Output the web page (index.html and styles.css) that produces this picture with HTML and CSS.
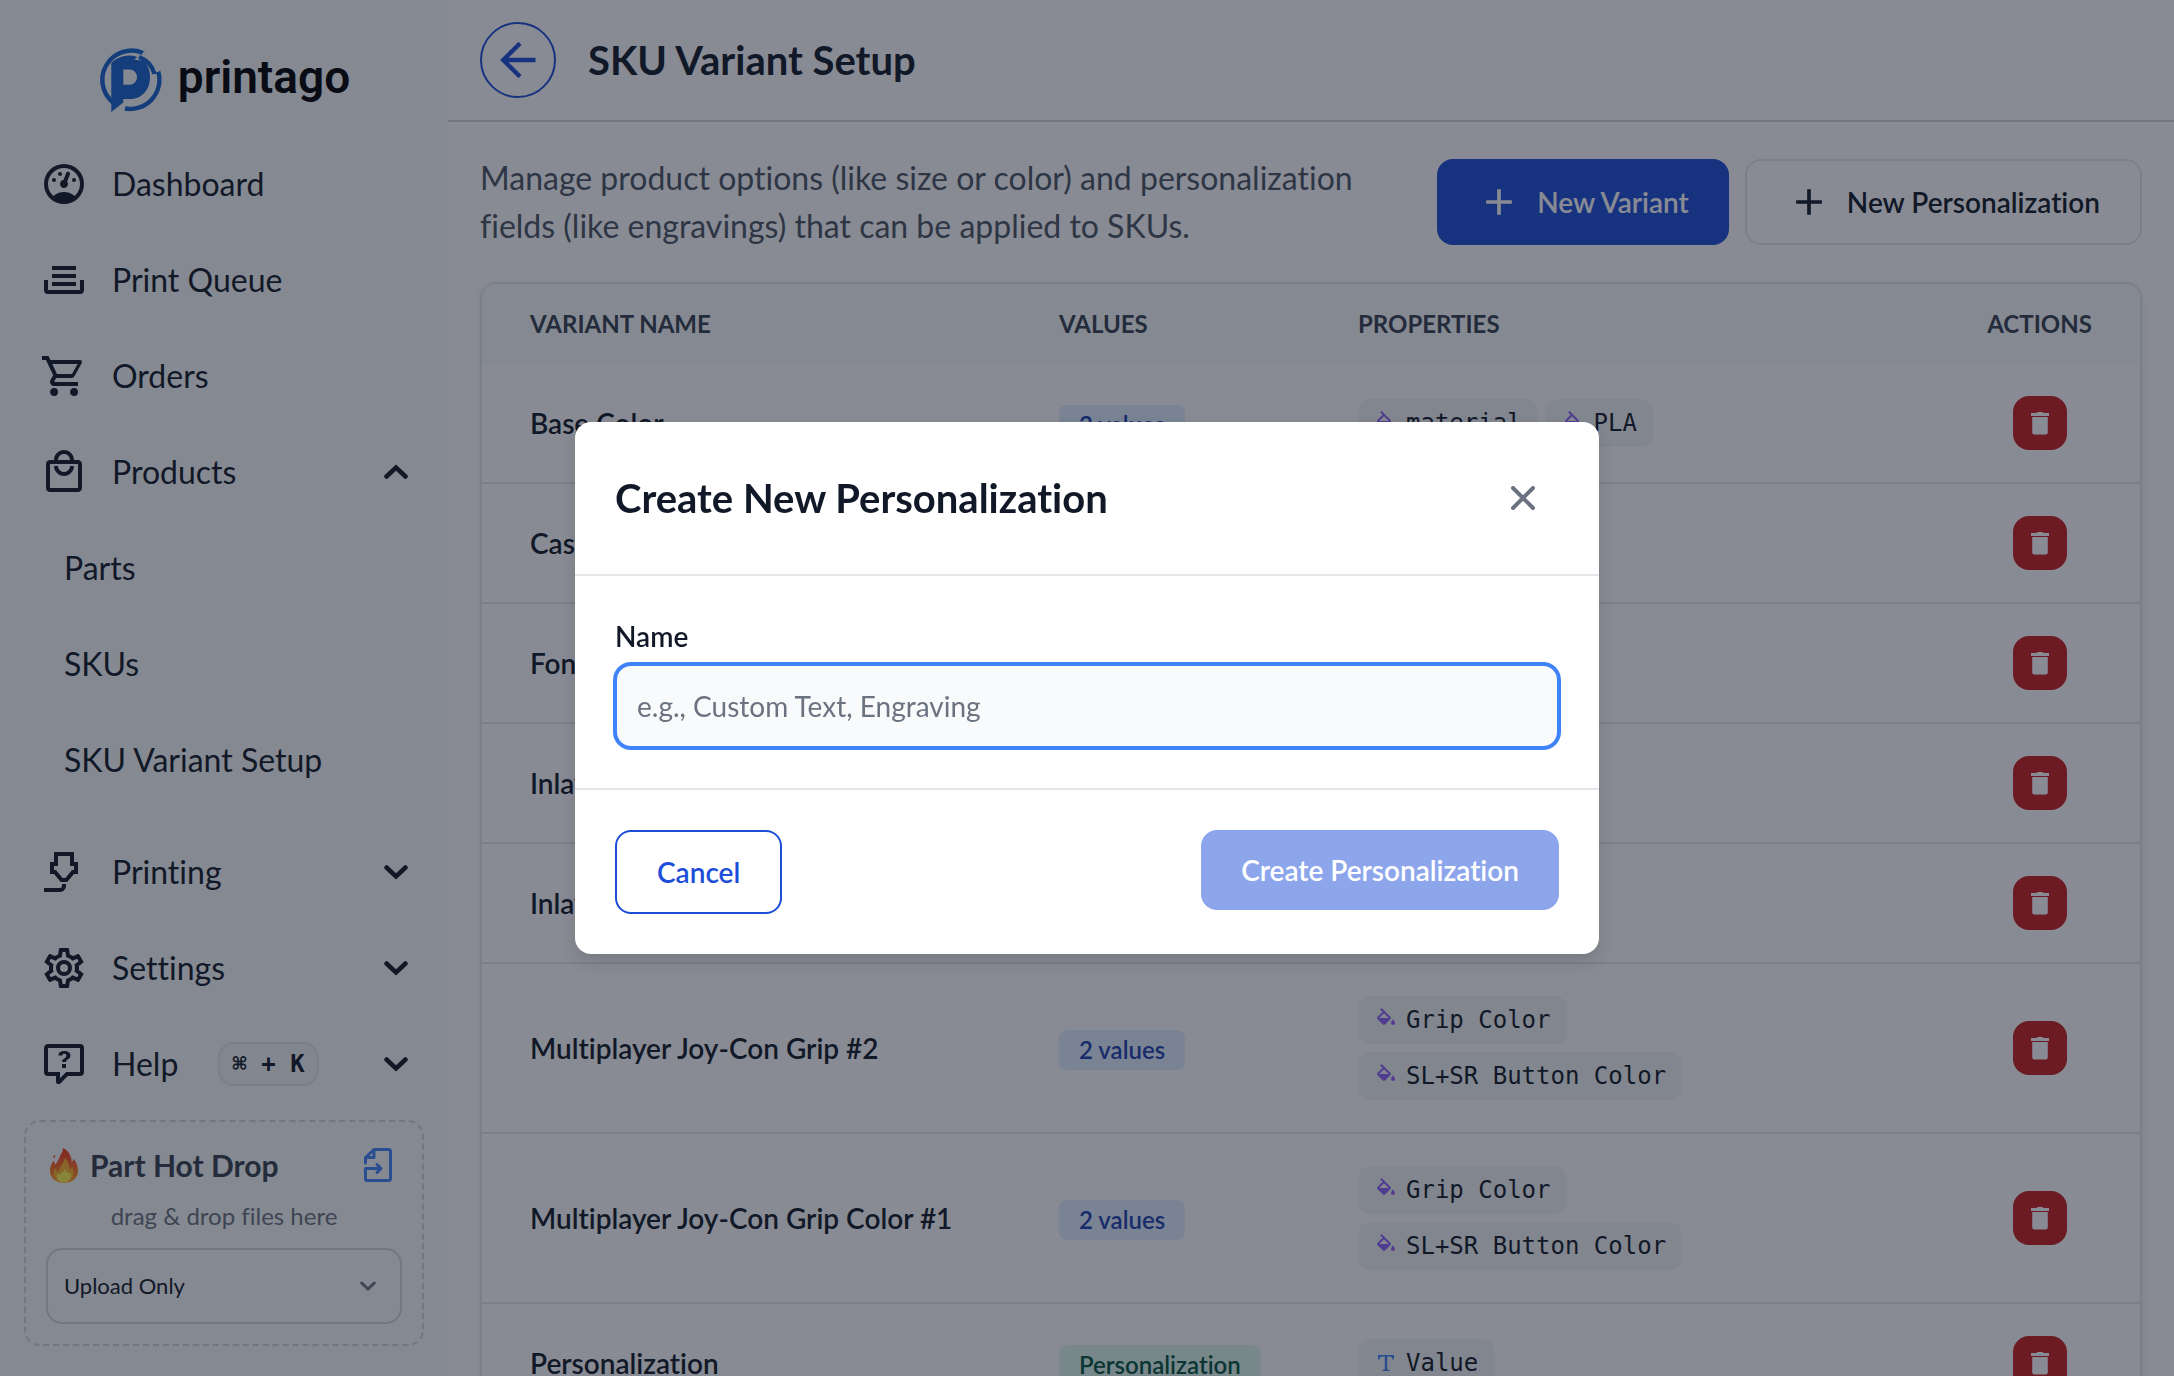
FILE: index.html
```html
<!DOCTYPE html>
<html lang="en">
<head>
<meta charset="utf-8">
<meta name="viewport" content="width=device-width, initial-scale=1">
<title>SKU Variant Setup - printago</title>
<link rel="stylesheet" href="styles.css">
</head>
<body>
<svg class="sprite" aria-hidden="true">
  <symbol id="i-gauge" viewBox="0 0 24 24"><path d="M12,2A10,10 0 0,0 2,12A10,10 0 0,0 12,22A10,10 0 0,0 22,12A10,10 0 0,0 12,2M12,4A8,8 0 0,1 20,12C20,14.4 19,16.5 17.3,18C15.9,16.7 14,16 12,16C10,16 8.2,16.7 6.7,18C5,16.5 4,14.4 4,12A8,8 0 0,1 12,4M14,5.89C13.62,5.9 13.26,6.15 13.1,6.54L11.81,9.77L11.71,10C11,10.13 10.41,10.6 10.14,11.26C9.73,12.29 10.23,13.45 11.26,13.86C12.29,14.27 13.45,13.77 13.86,12.74C14.12,12.08 14,11.32 13.57,10.76L13.67,10.5L14.96,7.29L14.97,7.26C15.17,6.75 14.92,6.17 14.41,5.96C14.28,5.91 14.15,5.89 14,5.89M10,6A1,1 0 0,0 9,7A1,1 0 0,0 10,8A1,1 0 0,0 11,7A1,1 0 0,0 10,6M7,9A1,1 0 0,0 6,10A1,1 0 0,0 7,11A1,1 0 0,0 8,10A1,1 0 0,0 7,9M17,9A1,1 0 0,0 16,10A1,1 0 0,0 17,11A1,1 0 0,0 18,10A1,1 0 0,0 17,9Z"/></symbol>
  <symbol id="i-tray" viewBox="0 0 24 24"><path d="M18 5H6V7H18M6 9H18V11H6M2 12H4V17H20V12H22V17A2 2 0 0 1 20 19H4A2 2 0 0 1 2 17M18 13H6V15H18Z"/></symbol>
  <symbol id="i-cart" viewBox="0 0 24 24"><path d="M17,18A2,2 0 0,1 19,20A2,2 0 0,1 17,22C15.89,22 15,21.1 15,20C15,18.89 15.89,18 17,18M1,2H4.27L5.21,4H20A1,1 0 0,1 21,5C21,5.17 20.95,5.34 20.88,5.5L17.3,11.97C16.96,12.58 16.3,13 15.55,13H8.1L7.2,14.63L7.17,14.75A0.25,0.25 0 0,0 7.42,15H19V17H7C5.89,17 5,16.1 5,15C5,14.65 5.09,14.32 5.24,14.04L6.6,11.59L3,4H1V2M7,18A2,2 0 0,1 9,20A2,2 0 0,1 7,22C5.89,22 5,21.1 5,20C5,18.89 5.89,18 7,18M16,11L18.78,6H6.14L8.5,11H16Z"/></symbol>
  <symbol id="i-bag" viewBox="0 0 24 24"><path d="M19 6H17C17 3.24 14.76 1 12 1S7 3.24 7 6H5C3.9 6 3 6.9 3 8V20C3 21.1 3.9 22 5 22H19C20.1 22 21 21.1 21 20V8C21 6.9 20.1 6 19 6M12 3C13.66 3 15 4.34 15 6H9C9 4.34 10.34 3 12 3M19 20H5V8H19V20M12 12C10.34 12 9 10.66 9 9H7C7 11.76 9.24 14 12 14S17 11.76 17 9H15C15 10.66 13.66 12 12 12Z"/></symbol>
  <symbol id="i-nozzle" viewBox="0 0 24 24"><path fill-rule="evenodd" d="M7 2H17V7H19V13H17L13.6 17H10.4L7 13H5V7H7V2M9 4V9H7V11H8L11.3 15H12.7L16 11H17V9H15V4H9M2 20H10A1 1 0 0 0 11 19V18H13V19A3 3 0 0 1 10 22H2V20Z"/></symbol>
  <symbol id="i-cog" viewBox="0 0 24 24"><path d="M12,8A4,4 0 0,1 16,12A4,4 0 0,1 12,16A4,4 0 0,1 8,12A4,4 0 0,1 12,8M12,10A2,2 0 0,0 10,12A2,2 0 0,0 12,14A2,2 0 0,0 14,12A2,2 0 0,0 12,10M10,22C9.75,22 9.54,21.82 9.5,21.58L9.13,18.93C8.5,18.68 7.96,18.34 7.44,17.94L4.95,18.95C4.73,19.03 4.46,18.95 4.34,18.73L2.34,15.27C2.21,15.05 2.27,14.78 2.46,14.63L4.57,12.97L4.5,12L4.57,11L2.46,9.37C2.27,9.22 2.21,8.95 2.34,8.73L4.34,5.27C4.46,5.05 4.73,4.96 4.95,5.05L7.44,6.05C7.96,5.66 8.5,5.32 9.13,5.07L9.5,2.42C9.54,2.18 9.75,2 10,2H14C14.25,2 14.46,2.18 14.5,2.42L14.87,5.07C15.5,5.32 16.04,5.66 16.56,6.05L19.05,5.05C19.27,4.96 19.54,5.05 19.66,5.27L21.66,8.73C21.79,8.95 21.73,9.22 21.54,9.37L19.43,11L19.5,12L19.43,13L21.54,14.63C21.73,14.78 21.79,15.05 21.66,15.27L19.66,18.73C19.54,18.95 19.27,19.04 19.05,18.95L16.56,17.95C16.04,18.34 15.5,18.68 14.87,18.93L14.5,21.58C14.46,21.82 14.25,22 14,22H10M11.25,4L10.88,6.61C9.68,6.86 8.62,7.5 7.85,8.39L5.44,7.35L4.69,8.65L6.8,10.2C6.4,11.37 6.4,12.64 6.8,13.8L4.68,15.36L5.43,16.66L7.86,15.62C8.63,16.5 9.68,17.14 10.87,17.38L11.24,20H12.76L13.13,17.39C14.32,17.14 15.37,16.5 16.14,15.62L18.57,16.66L19.32,15.36L17.2,13.81C17.6,12.64 17.6,11.37 17.2,10.2L19.31,8.65L18.56,7.35L16.15,8.39C15.38,7.5 14.32,6.86 13.12,6.62L12.75,4H11.25Z"/></symbol>
  <symbol id="i-help" viewBox="0 0 24 24"><path d="M4 2H20A2 2 0 0 1 22 4V16A2 2 0 0 1 20 18H13.9L10.2 21.71C10 21.9 9.75 22 9.5 22H9A1 1 0 0 1 8 21V18H4A2 2 0 0 1 2 16V4C2 2.89 2.9 2 4 2M4 4V16H10V19.08L13.08 16H20V4H4M12.19 5.5C11.3 5.5 10.59 5.68 10.05 6.04C9.5 6.4 9.22 7 9.27 7.69H11.24C11.24 7.41 11.34 7.2 11.5 7.06C11.7 6.92 11.92 6.85 12.19 6.85C12.5 6.85 12.77 6.93 12.95 7.11C13.13 7.28 13.22 7.5 13.22 7.8C13.22 8.08 13.14 8.33 13 8.54C12.83 8.76 12.62 8.94 12.36 9.08C11.84 9.4 11.5 9.68 11.29 9.92C11.1 10.16 11 10.5 11 11H13C13 10.72 13.05 10.5 13.14 10.32C13.23 10.15 13.4 10 13.66 9.85C14.12 9.64 14.5 9.36 14.79 9C15.08 8.63 15.23 8.24 15.23 7.8C15.23 7.1 14.96 6.54 14.42 6.12C13.88 5.71 13.13 5.5 12.19 5.5M11 12V14H13V12H11Z"/></symbol>
  <symbol id="i-down" viewBox="0 0 24 24"><path d="M2.5 7.5 12 16.5l9.500-9" fill="none" stroke="currentColor" stroke-width="4.500" stroke-linecap="round" stroke-linejoin="miter"/></symbol>
  <symbol id="i-up" viewBox="0 0 24 24"><path d="M2.500 16.500 12 7.500l9.500 9" fill="none" stroke="currentColor" stroke-width="4.500" stroke-linecap="round" stroke-linejoin="miter"/></symbol>
  <symbol id="i-plus" viewBox="0 0 24 24"><path d="M19,13H13V19H11V13H5V11H11V5H13V11H19V13Z"/></symbol>
  <symbol id="i-back" viewBox="0 0 24 24"><path d="M22 10.750V13.250H6.600L14 20.600 12.300 22.400 1.800 12 12.300 1.600 14 3.400 6.600 10.750H22Z"/></symbol>
  <symbol id="i-close" viewBox="0 0 24 24"><path d="M2 2 22 22M22 2 2 22" fill="none" stroke="currentColor" stroke-width="4" stroke-linecap="round"/></symbol>
  <symbol id="i-trash" viewBox="0 0 20 24"><path d="M1 2H6.500L7.500 1H12.500L13.500 2H19V5H1ZM2.250 6H17.750V22L16.500 23.500H3.500L2.250 22Z"/></symbol>
  <symbol id="i-fill" viewBox="0 0 24 24"><path d="M19 11.500S17 13.670 17 15A2 2 0 0 0 19 17A2 2 0 0 0 21 15C21 13.670 19 11.500 19 11.500M5.210 10L10 5.210L14.790 10M16.560 8.940L7.620 0L6.210 1.410L8.590 3.790L3.440 8.940C2.850 9.500 2.850 10.470 3.440 11.060L8.940 16.560C9.230 16.850 9.620 17 10 17C10.380 17 10.770 16.850 11.060 16.560L16.560 11.060C17.150 10.470 17.150 9.500 16.560 8.940Z"/></symbol>
  <symbol id="i-type" viewBox="0 0 24 24"><path d="M4 4H20V8.500H18.600C18.300 6.500 17.500 5.600 15.500 5.600H13.200V17.500C13.200 18.600 13.800 18.800 15.500 18.900V20H8.500V18.900C10.200 18.800 10.800 18.600 10.800 17.500V5.600H8.500C6.500 5.600 5.700 6.500 5.400 8.500H4Z"/></symbol>
  <symbol id="i-import" viewBox="0 0 28 34"><path d="M1.500 15V9.500L10 1.500H24.500A2 2 0 0 1 26.500 3.500V30.500A2 2 0 0 1 24.500 32.500H3.500A2 2 0 0 1 1.500 30.500V20.500H16M10 2V9.500H2M13 16.500 17 20.500 13 24.500" fill="none" stroke="currentColor" stroke-width="3" stroke-linejoin="round" stroke-linecap="round"/></symbol>
</svg>

<div class="app">
  <aside class="sidebar">
    <a class="brand" href="#">
      <svg class="brand-mark" viewBox="0 0 64 64" aria-hidden="true">
        <path d="M13.300 15C18 10 25 7.500 32.500 7.500Q36 7.500 39.500 9L36 11.500 46 13C50 17 52 23 52 29.500 52 42 43.500 51 32.500 51H25.300V54.500L13.300 64ZM25.300 21.500V36.700H31.500A7.600 7.600 0 0 0 31.500 21.500Z" fill="#1562cf" fill-rule="evenodd"/>
        <g fill="none" stroke="#1562cf" stroke-width="4.400">
          <path d="M15 54.500A29.300 29.300 0 0 1 44.500 4.700"/>
          <path d="M41 9A25 25 0 0 1 56.500 26"/>
          <path d="M60.400 24A29.300 29.300 0 0 1 27 60.500"/>
        </g>
        <path d="M42 5 47 2.500 43 7ZM55 26 63 22.500 60 26Z" fill="#1562cf"/>
      </svg>
      <span class="brand-name">printago</span>
    </a>

    <nav class="nav" aria-label="Main">
      <a class="nav-item" href="#"><svg class="nav-icon"><use href="#i-gauge"/></svg>Dashboard</a>
      <a class="nav-item" href="#"><svg class="nav-icon"><use href="#i-tray"/></svg>Print Queue</a>
      <a class="nav-item" href="#"><svg class="nav-icon"><use href="#i-cart"/></svg>Orders</a>
      <button class="nav-item" type="button" aria-expanded="true"><svg class="nav-icon"><use href="#i-bag"/></svg>Products<svg class="chevron"><use href="#i-up"/></svg></button>
      <div class="subnav">
        <a class="nav-item" href="#">Parts</a>
        <a class="nav-item" href="#">SKUs</a>
        <a class="nav-item" href="#">SKU Variant Setup</a>
      </div>
      <button class="nav-item" type="button" aria-expanded="false"><svg class="nav-icon"><use href="#i-nozzle"/></svg>Printing<svg class="chevron"><use href="#i-down"/></svg></button>
      <button class="nav-item" type="button" aria-expanded="false"><svg class="nav-icon"><use href="#i-cog"/></svg>Settings<svg class="chevron"><use href="#i-down"/></svg></button>
      <button class="nav-item" type="button" aria-expanded="false"><svg class="nav-icon"><use href="#i-help"/></svg>Help<kbd class="kbd">⌘ + K</kbd><svg class="chevron"><use href="#i-down"/></svg></button>
    </nav>

    <section class="hot-drop">
      <h2 class="hot-title">
        <svg class="fire" viewBox="0 0 28 35" aria-hidden="true">
          <defs><linearGradient id="flame" x1="0" y1="0" x2="0" y2="1"><stop offset="0" stop-color="#f2361f"/><stop offset=".55" stop-color="#fb6a22"/><stop offset="1" stop-color="#ffa51f"/></linearGradient></defs>
          <path d="M13 0C19 3 22 9 21.500 14 23 13 23.500 12 23.500 10.500 27 15 28 19 28 23 28 31 21 35 14 35S0 31 0 22.500C0 18 2 15.500 3.500 12.500 4.500 14 4.500 15 5 16.500 8 14 8.500 11 10 8 11.500 5.500 13 3 13 0ZM3 8 5.500 7 4.500 11Z" fill="url(#flame)"/>
          <path d="M15 10C19 15 20 19 19.500 22 21 21 22 20 22 18.500 25 24 24 34 14 34 5 34 2 27 5 20 6 23 7 23.500 8.500 24 9 18 14 16 15 10Z" fill="#ffb52b"/>
          <path d="M14.500 21C18 25 18.500 26 21 25 22 31 18.500 34.500 14 34.500S6 31 7 26C11 27 13 25 14.500 21Z" fill="#fff04a"/>
        </svg>
        Part Hot Drop
        <svg class="import"><use href="#i-import"/></svg>
      </h2>
      <p class="hot-hint">drag &amp; drop files here</p>
      <div class="select-wrap">
        <select class="select" aria-label="Upload mode"><option>Upload Only</option></select>
        <svg class="select-arrow"><use href="#i-down"/></svg>
      </div>
    </section>
  </aside>

  <main class="main">
    <header class="topbar">
      <button class="back" type="button" aria-label="Back"><svg><use href="#i-back"/></svg></button>
      <h1 class="page-title">SKU Variant Setup</h1>
    </header>

    <div class="content">
      <div class="intro">
        <p class="intro-text">Manage product options (like size or color) and personalization fields (like engravings) that can be applied to SKUs.</p>
        <div class="intro-actions">
          <button class="btn btn-primary btn-tall" type="button"><svg class="plus"><use href="#i-plus"/></svg>New Variant</button>
          <button class="btn btn-light btn-tall" type="button"><svg class="plus"><use href="#i-plus"/></svg>New Personalization</button>
        </div>
      </div>

      <div class="table-card">
        <table class="variants">
          <colgroup><col class="col-name"><col class="col-values"><col><col class="col-actions"></colgroup>
          <thead>
            <tr><th scope="col">VARIANT NAME</th><th scope="col">VALUES</th><th scope="col">PROPERTIES</th><th scope="col">ACTIONS</th></tr>
          </thead>
          <tbody>
            <tr>
              <td>Base Color</td><td><span class="badge">2 values</span></td>
              <td><div class="chips"><span class="chip"><svg><use href="#i-fill"/></svg>material</span><span class="chip"><svg><use href="#i-fill"/></svg>PLA</span></div></td>
              <td><button class="trash" type="button" aria-label="Delete"><svg><use href="#i-trash"/></svg></button></td>
            </tr>
            <tr>
              <td>Case</td><td></td><td></td>
              <td><button class="trash" type="button" aria-label="Delete"><svg><use href="#i-trash"/></svg></button></td>
            </tr>
            <tr>
              <td>Font</td><td></td><td></td>
              <td><button class="trash" type="button" aria-label="Delete"><svg><use href="#i-trash"/></svg></button></td>
            </tr>
            <tr>
              <td>Inlay</td><td></td><td></td>
              <td><button class="trash" type="button" aria-label="Delete"><svg><use href="#i-trash"/></svg></button></td>
            </tr>
            <tr>
              <td>Inlay</td><td></td><td></td>
              <td><button class="trash" type="button" aria-label="Delete"><svg><use href="#i-trash"/></svg></button></td>
            </tr>
            <tr>
              <td>Multiplayer Joy-Con Grip #2</td><td><span class="badge">2 values</span></td>
              <td><div class="chips"><span class="chip"><svg><use href="#i-fill"/></svg>Grip Color</span><span class="chip"><svg><use href="#i-fill"/></svg>SL+SR Button Color</span></div></td>
              <td><button class="trash" type="button" aria-label="Delete"><svg><use href="#i-trash"/></svg></button></td>
            </tr>
            <tr>
              <td>Multiplayer Joy-Con Grip Color #1</td><td><span class="badge">2 values</span></td>
              <td><div class="chips"><span class="chip"><svg><use href="#i-fill"/></svg>Grip Color</span><span class="chip"><svg><use href="#i-fill"/></svg>SL+SR Button Color</span></div></td>
              <td><button class="trash" type="button" aria-label="Delete"><svg><use href="#i-trash"/></svg></button></td>
            </tr>
            <tr>
              <td>Personalization</td><td><span class="badge badge-green">Personalization</span></td>
              <td><div class="chips"><span class="chip chip-text"><svg><use href="#i-type"/></svg>Value</span></div></td>
              <td><button class="trash" type="button" aria-label="Delete"><svg><use href="#i-trash"/></svg></button></td>
            </tr>
          </tbody>
        </table>
      </div>
    </div>
  </main>
</div>

<div class="overlay">
  <form class="modal" role="dialog" aria-modal="true" aria-labelledby="modal-title">
    <header class="modal-head">
      <h2 class="modal-title" id="modal-title">Create New Personalization</h2>
      <button class="close" type="button" aria-label="Close"><svg><use href="#i-close"/></svg></button>
    </header>
    <div class="modal-body">
      <label class="label" for="name">Name</label>
      <input class="input" id="name" type="text" placeholder="e.g., Custom Text, Engraving">
    </div>
    <footer class="modal-foot">
      <button class="btn btn-outline" type="button">Cancel</button>
      <button class="btn btn-primary" type="submit" disabled>Create Personalization</button>
    </footer>
  </form>
</div>
</body>
</html>
```
FILE: styles.css
```css
*,
*::before,
*::after {
  box-sizing: border-box;
}

body {
  margin: 0;
  height: 100vh;
  overflow: hidden;
  background: #fff;
  color: #111827;
  font-family: Lato, "Noto Sans", sans-serif;
  font-size: 28px;
  font-variant-ligatures: no-common-ligatures;
  line-height: 40px;
}

h1, h2, p {
  margin: 0;
}

button, input, select {
  font: inherit;
  font-variant-ligatures: inherit;
  color: inherit;
}

button {
  cursor: pointer;
}

svg {
  fill: currentColor;
  flex: none;
}

.sprite {
  display: none;
}

.app {
  display: flex;
  height: 100vh;
}

/* Sidebar */
.sidebar {
  flex: none;
  width: 448px;
  display: flex;
  flex-direction: column;
  background: #f9fafb;
}

.brand {
  display: flex;
  align-items: center;
  justify-content: center;
  gap: 16px;
  height: 136px;
  padding-top: 24px;
  color: #000;
  text-decoration: none;
}

.brand-mark {
  width: 64px;
  height: 64px;
}

.brand-name {
  padding-bottom: 6px;
  font-family: Roboto, sans-serif;
  font-size: 46px;
  font-weight: 600;
  line-height: 64px;
}

.nav {
  display: flex;
  flex-direction: column;
}

.nav-item {
  display: flex;
  align-items: center;
  width: 100%;
  height: 96px;
  padding: 0 40px;
  border: 0;
  background: none;
  color: #111827;
  font-size: 32px;
  text-align: left;
  text-decoration: none;
}

.nav-icon {
  width: 48px;
  height: 48px;
  margin-right: 24px;
}

.subnav {
  padding: 0 0 16px 24px;
}

.chevron {
  width: 24px;
  height: 24px;
  margin-left: auto;
}

.kbd {
  height: 44px;
  margin-left: 40px;
  padding: 0 12px;
  border: 2px solid #e5e7eb;
  border-radius: 16px;
  background: #f3f4f6;
  font: bold 24px/40px "DejaVu Sans Mono", monospace;
}

.hot-drop {
  margin: 8px 24px 0;
  padding: 20px;
  border: 2px dashed #d1d5db;
  border-radius: 16px;
}

.hot-title {
  display: flex;
  align-items: center;
  gap: 12px;
  height: 46px;
  padding: 0 10px 0 4px;
  color: #374151;
  font-size: 30px;
  font-weight: 700;
}

.fire {
  width: 28px;
  height: 35px;
}

.import {
  width: 28px;
  height: 34px;
  margin-left: auto;
  color: #3f83f8;
}

.hot-hint {
  padding: 8px 0 12px;
  color: #6b7280;
  font-size: 24px;
  text-align: center;
}

.select-wrap {
  display: grid;
  align-items: center;
}

.select {
  grid-area: 1 / 1;
  width: 100%;
  height: 76px;
  padding: 0 16px;
  border: 2px solid #d1d5db;
  border-radius: 16px;
  background: #f9fafb;
  font-size: 22px;
  appearance: none;
}

.select-arrow {
  grid-area: 1 / 1;
  justify-self: end;
  width: 16px;
  height: 16px;
  margin-right: 26px;
  color: #6b7280;
  pointer-events: none;
}

/* Main column */
.main {
  flex: 1;
  min-width: 0;
  overflow: hidden;
}

.topbar {
  display: flex;
  align-items: center;
  gap: 32px;
  height: 122px;
  padding: 0 32px;
  border-bottom: 2px solid #d1d5db;
}

.back {
  display: grid;
  place-items: center;
  width: 76px;
  height: 76px;
  padding: 0;
  border: 2px solid #1d4ed8;
  border-radius: 50%;
  background: none;
  color: #1d4ed8;
}

.back svg {
  width: 42px;
  height: 42px;
}

.page-title {
  font-size: 40px;
  font-weight: 700;
  line-height: 48px;
}

.content {
  padding: 32px;
}

.intro {
  display: flex;
  align-items: center;
  justify-content: space-between;
  gap: 32px;
  margin-bottom: 32px;
}

.intro-text {
  max-width: 900px;
  color: #4b5563;
  font-size: 32px;
  line-height: 48px;
}

.intro-actions {
  display: flex;
  flex: none;
  gap: 16px;
}

.btn {
  display: flex;
  align-items: center;
  justify-content: center;
  gap: 16px;
  height: 80px;
  padding: 0 40px;
  border: 0;
  border-radius: 16px;
  font-weight: 600;
  white-space: nowrap;
}

.btn-tall {
  height: 86px;
}

.btn-primary {
  background: #1d4ed8;
  color: #fff;
}

.btn-primary:disabled {
  opacity: 0.5;
}

.btn-light {
  border: 2px solid #e5e7eb;
  background: #fff;
}

.btn-outline {
  height: 84px;
  border: 2px solid #1d4ed8;
  background: #fff;
  color: #1d4ed8;
}

.plus {
  width: 44px;
  height: 44px;
}

/* Table */
.table-card {
  overflow: hidden;
  border: 2px solid #e5e7eb;
  border-radius: 16px;
  box-shadow: 0 2px 6px rgba(0, 0, 0, 0.1);
}

.variants {
  width: 100%;
  table-layout: fixed;
  border-collapse: separate;
  border-spacing: 0;
}

.col-name {
  width: 529px;
}

.col-values {
  width: 299px;
}

.col-actions {
  width: 201px;
}

.variants th {
  height: 80px;
  padding: 0 48px;
  background: #f9fafb;
  color: #374151;
  font-size: 24px;
  font-weight: 700;
  text-align: left;
}

.variants td {
  padding: 32px 48px;
  border-bottom: 2px solid #e5e7eb;
  font-weight: 600;
  vertical-align: middle;
}

.variants th:last-child,
.variants td:last-child {
  padding-right: 0;
  padding-left: 0;
  text-align: center;
}

.badge {
  display: inline-block;
  padding: 0 20px;
  border-radius: 8px;
  background: #e1effe;
  color: #1e40af;
  font-size: 24px;
  vertical-align: middle;
}

.badge-green {
  background: #def7ec;
  color: #03543f;
}

.chips {
  display: flex;
  flex-wrap: wrap;
  gap: 8px;
}

.chip {
  display: flex;
  align-items: center;
  gap: 8px;
  height: 48px;
  padding: 0 16px;
  border-radius: 12px;
  background: #f3f4f6;
  font: 24px/48px "DejaVu Sans Mono", monospace;
}

.chip svg {
  width: 24px;
  height: 24px;
  color: #9061f9;
}

.chip-text svg {
  color: #3f83f8;
}

.trash {
  display: grid;
  place-items: center;
  width: 54px;
  height: 54px;
  margin: 0 auto;
  padding: 0;
  border: 0;
  border-radius: 16px;
  background: #c81e1e;
  color: #fff;
}

.trash svg {
  width: 20px;
  height: 24px;
}

/* Modal */
.overlay {
  position: fixed;
  inset: 0;
  display: grid;
  place-items: center;
  background: rgba(17, 24, 39, 0.5);
}

.modal {
  width: 1024px;
  max-width: 96vw;
  border-radius: 16px;
  background: #fff;
  box-shadow: 0 8px 16px rgba(0, 0, 0, 0.12);
}

.modal-head {
  display: flex;
  align-items: center;
  justify-content: space-between;
  padding: 40px;
  border-bottom: 2px solid #e5e7eb;
}

.modal-title {
  font-size: 40px;
  font-weight: 700;
  line-height: 48px;
}

.close {
  display: grid;
  place-items: center;
  width: 72px;
  height: 72px;
  padding: 0;
  border: 0;
  background: none;
  color: #6b7280;
}

.close svg {
  width: 24px;
  height: 24px;
}

.modal-body {
  padding: 40px;
}

.label {
  display: block;
  margin-bottom: 8px;
  font-weight: 600;
}

.input {
  display: block;
  width: 100%;
  height: 84px;
  padding: 0 20px;
  border: 2px solid #3f83f8;
  border-radius: 16px;
  outline: none;
  background: #f9fafb;
  box-shadow: 0 0 0 2px #3f83f8;
}

.input::placeholder {
  color: #6b7280;
  opacity: 1;
}

.modal-foot {
  display: flex;
  align-items: flex-start;
  justify-content: space-between;
  padding: 40px;
  border-top: 2px solid #e5e7eb;
}
```
